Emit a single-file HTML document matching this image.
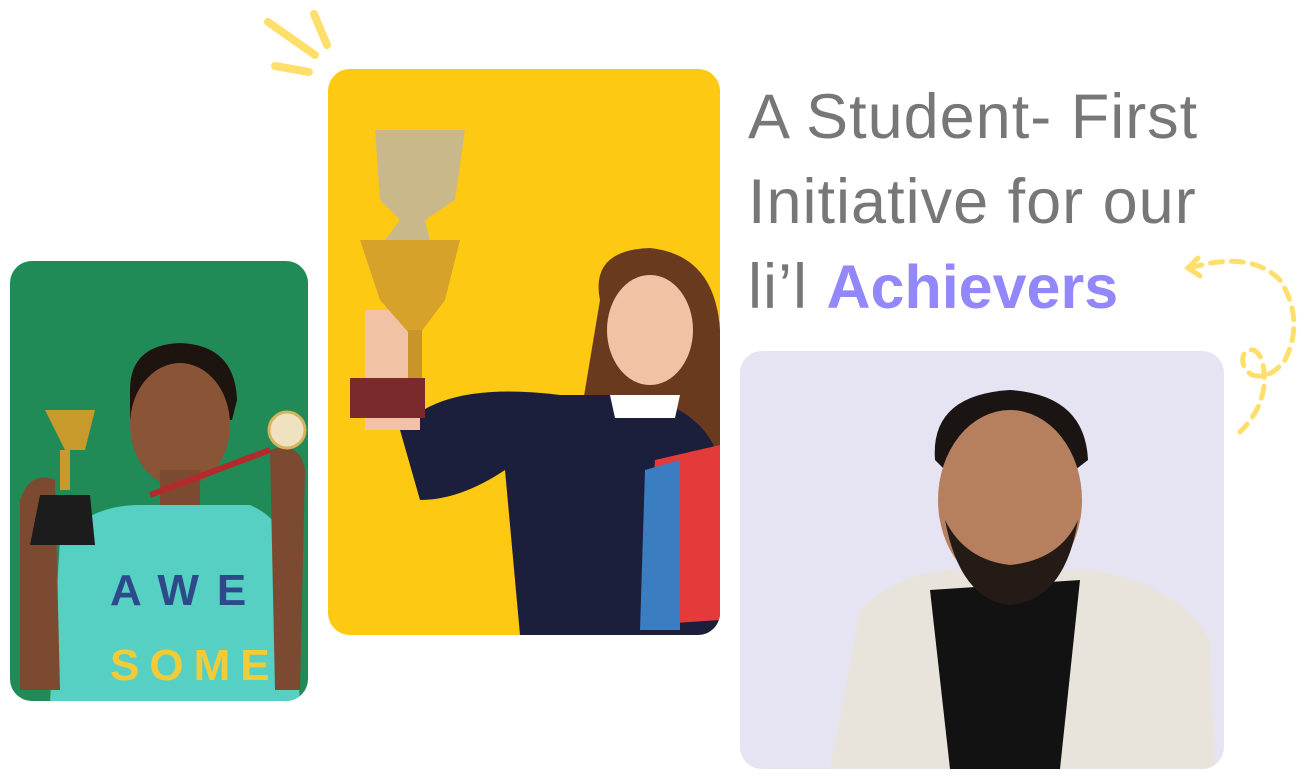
<!DOCTYPE html>
<html><head><meta charset="utf-8"><style>
html,body{margin:0;padding:0;background:#fff;width:1309px;height:779px;overflow:hidden}
.t{position:absolute;left:748px;font-family:"Liberation Sans",sans-serif;font-size:63px;color:#777;letter-spacing:1px;white-space:nowrap;line-height:1}
.t b{color:#9287fb;font-weight:bold;font-size:61px;letter-spacing:0}
</style></head><body>
<svg width="1309" height="779" style="position:absolute;left:0;top:0">
<defs>
<clipPath id="cg"><rect x="10" y="261" width="298" height="440" rx="22"/></clipPath>
<clipPath id="cy"><rect x="328" y="69" width="392" height="566" rx="22"/></clipPath>
<clipPath id="cl"><rect x="740" y="351" width="484" height="418" rx="22"/></clipPath>
</defs>
<g stroke="#ffdf6b" stroke-width="8" stroke-linecap="round">
<line x1="268" y1="22" x2="315" y2="55"/><line x1="314" y1="14" x2="327" y2="45"/><line x1="275" y1="66" x2="309" y2="72"/>
</g>
<g clip-path="url(#cg)">
<rect x="10" y="261" width="298" height="440" fill="#208b57"/>
<path d="M130 390 Q130 345 180 343 Q235 345 237 400 L232 420 L130 420Z" fill="#1d1410"/>
<ellipse cx="180" cy="425" rx="50" ry="62" fill="#8a5436"/>
<rect x="160" y="470" width="40" height="40" fill="#7c4a30"/>
<path d="M60 540 Q90 505 140 505 L250 505 Q285 520 290 560 L300 701 L50 701Z" fill="#55d0c3"/>
<path d="M20 500 Q30 470 55 480 L60 690 L20 690Z" fill="#7c4a30"/>
<path d="M270 450 Q300 440 305 470 L300 690 L275 690Z" fill="#7c4a30"/>
<text x="110" y="605" font-family="Liberation Sans" font-weight="bold" font-size="44" fill="#2c4a8a" letter-spacing="18">AWE</text>
<text x="110" y="680" font-family="Liberation Sans" font-weight="bold" font-size="44" fill="#f2cc38" letter-spacing="10">SOME</text>
<path d="M45 410 L95 410 L85 450 L65 450Z" fill="#c79a2c"/>
<rect x="60" y="450" width="10" height="40" fill="#c79a2c"/>
<path d="M40 495 L90 495 L95 545 L30 545Z" fill="#1c1c1c"/>
<circle cx="287" cy="430" r="18" fill="#f0e2c0" stroke="#d6b35c" stroke-width="3"/>
<path d="M150 495 L270 450" stroke="#b42a2a" stroke-width="6" fill="none"/>
</g>
<g clip-path="url(#cy)">
<rect x="328" y="69" width="392" height="566" fill="#fdc913"/>
<path d="M600 300 Q590 250 650 248 Q715 255 720 330 L720 600 L690 570 L560 570 Q520 500 580 420Z" fill="#6a3a1e"/>
<ellipse cx="650" cy="330" rx="43" ry="55" fill="#f2c2a5"/>
<path d="M400 430 Q440 380 560 395 L620 395 Q700 400 720 460 L720 635 L520 635 L505 470 Q460 500 420 500Z" fill="#1b1f3b"/>
<path d="M610 395 L680 395 L675 418 L615 418Z" fill="#fff"/>
<rect x="365" y="310" width="55" height="120" fill="#f2c2a5"/>
<path d="M375 130 L465 130 L455 200 L425 220 L430 240 L385 240 L400 220 L380 200Z" fill="#c9b98a"/>
<path d="M360 240 L460 240 L445 300 L415 340 L380 300Z" fill="#d6a22a"/>
<rect x="408" y="330" width="14" height="50" fill="#c9942a"/>
<rect x="350" y="378" width="75" height="40" fill="#7a2a2a"/>
<path d="M655 460 L720 445 L720 620 L645 625Z" fill="#e53a3a"/>
<path d="M645 470 L680 460 L680 630 L640 630Z" fill="#3a7dc0"/>
</g>
<g clip-path="url(#cl)">
<rect x="740" y="351" width="484" height="418" fill="#e6e4f3"/>
<path d="M860 610 Q900 570 960 570 L1090 570 Q1180 585 1210 640 L1215 769 L830 769Z" fill="#e8e4dc"/>
<path d="M930 590 L1080 580 L1060 769 L950 769Z" fill="#121212"/>
<path d="M935 460 Q930 395 1010 390 Q1085 395 1088 460 L1075 470 L945 470Z" fill="#1a1412"/>
<ellipse cx="1010" cy="500" rx="72" ry="90" fill="#b6805e"/>
<path d="M945 520 Q960 600 1010 605 Q1065 600 1078 520 Q1060 560 1010 565 Q965 560 945 520Z" fill="#241a16"/>
</g>
<g fill="none" stroke="#ffdf6b" stroke-width="5" stroke-linecap="round">
<path d="M1190 268 Q1250 250 1280 280 Q1305 320 1285 360 Q1270 380 1252 375 Q1238 365 1245 352 Q1255 345 1262 360 Q1272 400 1240 432" stroke-dasharray="12 9"/>
<path d="M1198 258 L1188 268 L1200 276"/>
</g>
</svg>
<div class="t" style="top:86px">A Student- First</div>
<div class="t" style="top:171px">Initiative for our</div>
<div class="t" style="top:256px">li’l <b>Achievers</b></div>
</body></html>
